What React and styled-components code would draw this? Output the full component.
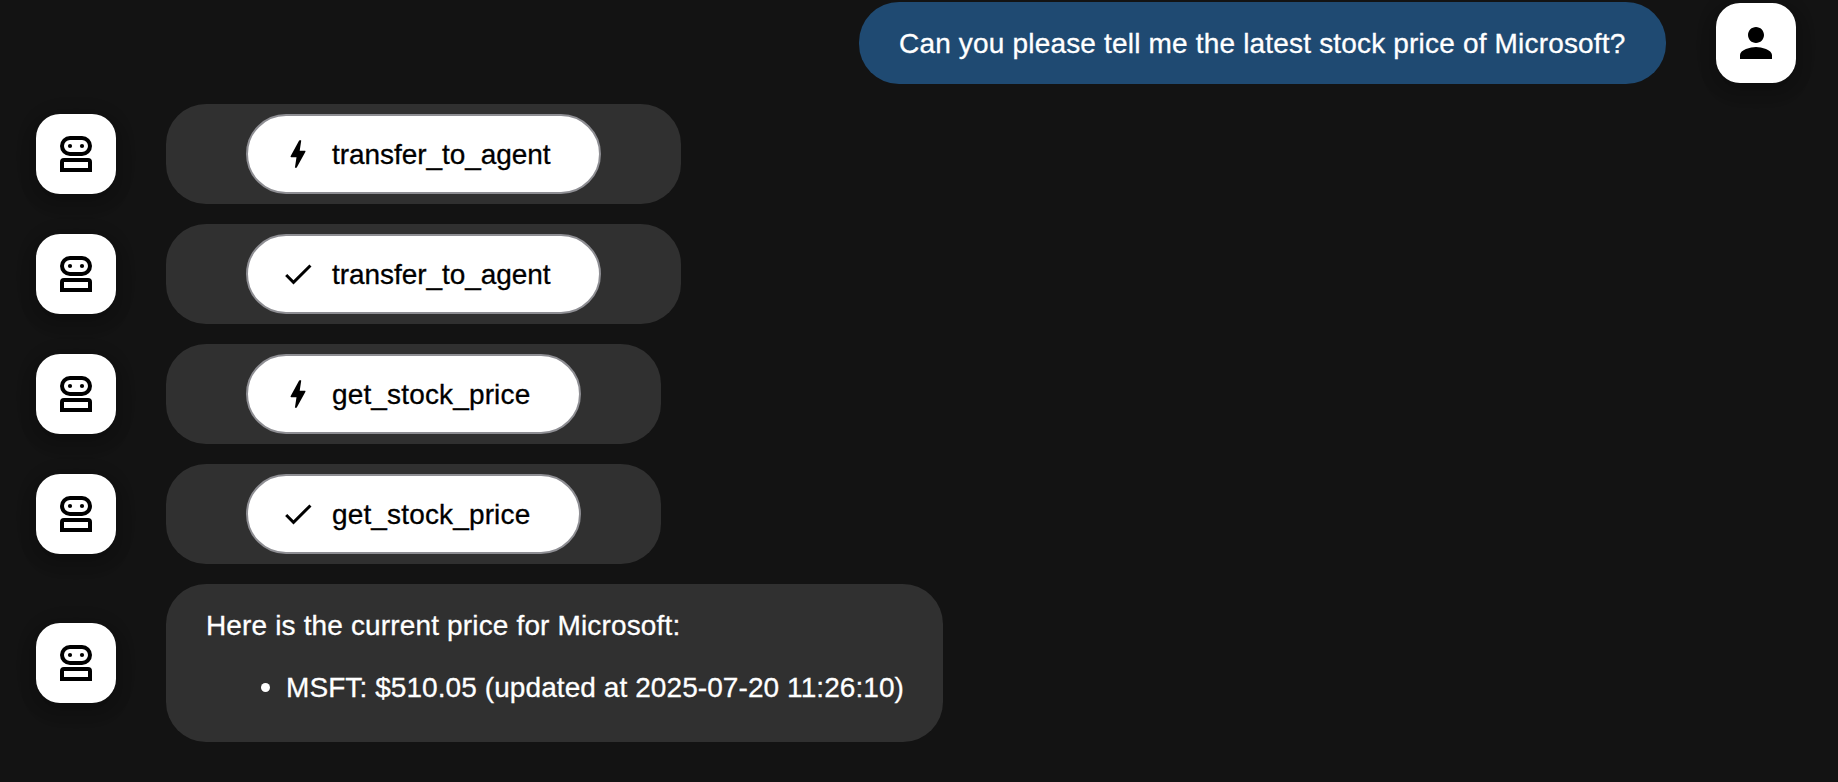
import React from 'react';
import styled, { createGlobalStyle } from 'styled-components';

const GlobalStyle = createGlobalStyle`
  * { box-sizing: border-box; }
  html, body { margin: 0; background: #131313; }
  body { overflow: hidden; }
`;

const Chat = styled.main`
  display: flex;
  flex-direction: column;
  gap: 20px;
  height: 782px;
  padding: 2px 42px 0 36px;
  background: #131313;
  color: #fff;
  font-family: 'Liberation Sans', Arial, sans-serif;
  font-size: 28px;
  line-height: 42px;
`;

const MessageRow = styled.section`
  display: flex;
  align-items: center;
  justify-content: ${({ $user }) => ($user ? 'flex-end' : 'flex-start')};
  gap: 50px;
`;

const Avatar = styled.div`
  display: flex;
  align-items: center;
  justify-content: center;
  flex: none;
  width: 80px;
  height: 80px;
  border-radius: 24px;
  background: #fff;
  color: #000;
  box-shadow: 0 6px 10px -2px rgba(0, 0, 0, 0.18), 0 10px 18px rgba(0, 0, 0, 0.1),
    0 2px 24px rgba(0, 0, 0, 0.08);
`;

const Bubble = styled.div`
  flex: none;
  width: ${({ $width }) => $width}px;
  padding: 20px 40px;
  border-radius: 40px;
  background: ${({ $user }) => ($user ? '#1f4a72' : '#303030')};
  white-space: nowrap;
`;

const ToolBubble = styled(Bubble)`
  padding: 10px 80px;
`;

const ToolButton = styled.button`
  display: flex;
  align-items: center;
  gap: 16px;
  width: 100%;
  height: 80px;
  padding: 0 0 0 32px;
  border: 2px solid #8e8e93;
  border-radius: 40px;
  background: #fff;
  color: #000;
  font: inherit;
`;

const Text = styled.span`
  display: block;
  padding-top: 2px;
  line-height: 40px;
  letter-spacing: ${({ $tracking = 0 }) => $tracking}px;
  -webkit-text-stroke: 0.3px currentColor;
`;

const Answer = styled(Bubble)`
  height: 158px;
`;

const List = styled.ul`
  margin: 20px 0 0;
  padding: 0 0 0 55px;
  list-style: none;
`;

const ListItem = styled.li`
  display: flex;
  align-items: center;
  gap: 16px;

  &::before {
    content: '';
    flex: none;
    width: 9px;
    height: 9px;
    border-radius: 50%;
    background: currentColor;
  }
`;

const Icon = ({ size, box = 24, path }) => (
  <svg width={size} height={size} viewBox={`0 0 ${box} ${box}`} fill="currentColor">
    <path d={path} />
  </svg>
);

const bolt = {
  box: 36,
  path: 'M19.7 4.3h1.2q.4 0 .3.5L19.7 14.8h5c.8 0 1 .5.6 1.1L16.9 31.2q-.3.6-.8.6h-1.2L16.5 21.2h-5.2c-.8 0-.9-.5-.6-1.1L19 4.8q.2-.5.7-.5z',
};
const check = { box: 24, path: 'M9 16.17L4.83 12l-1.42 1.41L9 19 21 7l-1.41-1.41z' };
const person = {
  box: 24,
  path: 'M12 12c2.21 0 4-1.79 4-4s-1.79-4-4-4-4 1.79-4 4 1.79 4 4 4zm0 2c-2.67 0-8 1.34-8 4v2h16v-2c0-2.66-5.33-4-8-4z',
};

const RobotIcon = () => (
  <svg width="48" height="48" viewBox="0 0 48 48">
    <rect x="10" y="8" width="28" height="16" rx="8" fill="none" stroke="#000" strokeWidth="4" />
    <circle cx="18" cy="16" r="2.1" />
    <circle cx="30" cy="16" r="2.1" />
    <path d="M8 42V32a4 4 0 0 1 4-4h24a4 4 0 0 1 4 4v10zM12 38h24v-6H12z" fillRule="evenodd" />
  </svg>
);

const calls = [
  { name: 'transfer_to_agent', icon: bolt, width: 515, tracking: -0.06 },
  { name: 'transfer_to_agent', icon: check, width: 515, tracking: -0.06 },
  { name: 'get_stock_price', icon: bolt, width: 495, tracking: 0.15 },
  { name: 'get_stock_price', icon: check, width: 495, tracking: 0.15 },
];

export default function App() {
  return (
    <>
      <GlobalStyle />
      <Chat>
        <MessageRow $user>
          <Bubble $user $width={807}>
            <Text $tracking={0.18}>Can you please tell me the latest stock price of Microsoft?</Text>
          </Bubble>
          <Avatar>
            <Icon size={48} {...person} />
          </Avatar>
        </MessageRow>
        {calls.map((call, index) => (
          <MessageRow key={index}>
            <Avatar>
              <RobotIcon />
            </Avatar>
            <ToolBubble $width={call.width}>
              <ToolButton type="button">
                <Icon size={36} {...call.icon} />
                <Text $tracking={call.tracking}>{call.name}</Text>
              </ToolButton>
            </ToolBubble>
          </MessageRow>
        ))}
        <MessageRow>
          <Avatar>
            <RobotIcon />
          </Avatar>
          <Answer $width={777}>
            <Text $tracking={0.15}>Here is the current price for Microsoft:</Text>
            <List>
              <ListItem>
                <Text $tracking={0.08}>MSFT: $510.05 (updated at 2025-07-20 11:26:10)</Text>
              </ListItem>
            </List>
          </Answer>
        </MessageRow>
      </Chat>
    </>
  );
}
